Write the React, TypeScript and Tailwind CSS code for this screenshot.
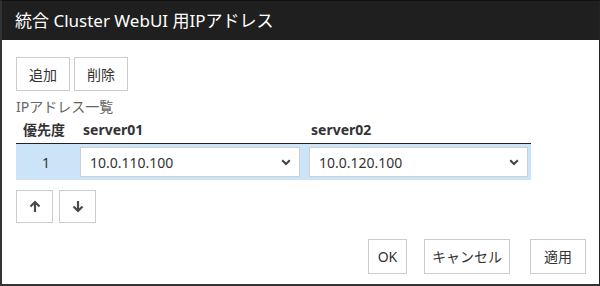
import React from "react";

const font = { fontFamily: '"Noto Sans", "Noto Sans CJK JP", sans-serif' };

function Chevron() {
  return (
    <svg width="10" height="7" viewBox="0 0 10 7" className="pointer-events-none absolute right-[9px] top-[12px]">
      <path d="M1.2 1.2 L5 5 L8.8 1.2" fill="none" stroke="#444" strokeWidth="2" />
    </svg>
  );
}

function Select({ value }: { value: string }) {
  return (
    <div className="relative w-full">
      <select
        defaultValue={value}
        className="block h-[30px] w-full appearance-none border border-[#cfcfcf] bg-white pl-[9px] text-[14px] text-[#333] outline-none"
        style={font}
      >
        <option>{value}</option>
      </select>
      <Chevron />
    </div>
  );
}

function Btn({ children, w, h }: { children: React.ReactNode; w: string; h: string }) {
  return (
    <button className={`flex items-center justify-center border border-[#cccccc] bg-white text-[14px] text-[#333] ${w} ${h}`}>
      {children}
    </button>
  );
}

function Arrow({ up }: { up: boolean }) {
  return (
    <svg width="12" height="13" viewBox="0 0 12 13" style={{ transform: up ? undefined : "rotate(180deg)" }}>
      <path d="M6 12 V2 M1.5 6.5 L6 2 L10.5 6.5" fill="none" stroke="#4a4a4a" strokeWidth="2.2" />
    </svg>
  );
}

export default function App() {
  return (
    <div className="h-[286px] w-[600px] overflow-hidden bg-white" style={font}>
      <div className="flex h-[286px] flex-col border-b-2 border-l-2 border-r border-t border-b-[#333] border-l-[#333] border-r-[#222] border-t-[#111]">
        <div className="flex h-[39px] items-center bg-[#1f1f1f] pl-[13px] text-[17px] text-white">
          統合 Cluster WebUI 用IPアドレス
        </div>
        <div className="flex flex-1 flex-col pl-[14px]">
          <div className="mt-[17px] flex gap-[4px]">
            <Btn w="w-[54px]" h="h-[34px]">追加</Btn>
            <Btn w="w-[54px]" h="h-[34px]">削除</Btn>
          </div>
          <div className="mt-[7px] text-[14px] leading-[18px] text-[#666]">IPアドレス一覧</div>
          <div className="grid w-[515px] grid-cols-[60px_229px_226px]">
            <div className="flex h-[27px] items-center pl-[7px] text-[14px] font-bold text-[#333]">優先度</div>
            <div className="flex h-[27px] items-center pl-[7px] text-[14px] font-bold text-[#333]">server01</div>
            <div className="flex h-[27px] items-center pl-[6px] text-[14px] font-bold text-[#333]">server02</div>
            <div className="col-span-3 h-[1px] bg-[#222]" />
            <div className="flex h-[36px] items-center justify-center bg-[#cce4f7] text-[14px] text-[#333]">1</div>
            <div className="flex h-[36px] items-center bg-[#cce4f7] pl-[4px] pr-[5px]">
              <Select value="10.0.110.100" />
            </div>
            <div className="flex h-[36px] items-center bg-[#cce4f7] pl-[4px] pr-[3px]">
              <Select value="10.0.120.100" />
            </div>
          </div>
          <div className="mt-[10px] flex gap-[6px]">
            <Btn w="w-[37px]" h="h-[33px]"><Arrow up /></Btn>
            <Btn w="w-[37px]" h="h-[33px]"><Arrow up={false} /></Btn>
          </div>
          <div className="mt-[16px] flex justify-end gap-[17px] pr-[13px]">
            <Btn w="w-[39px]" h="h-[35px]">OK</Btn>
            <div className="flex gap-[20px]">
              <Btn w="w-[86px]" h="h-[35px]">キャンセル</Btn>
              <Btn w="w-[56px]" h="h-[35px]">適用</Btn>
            </div>
          </div>
        </div>
      </div>
    </div>
  );
}
